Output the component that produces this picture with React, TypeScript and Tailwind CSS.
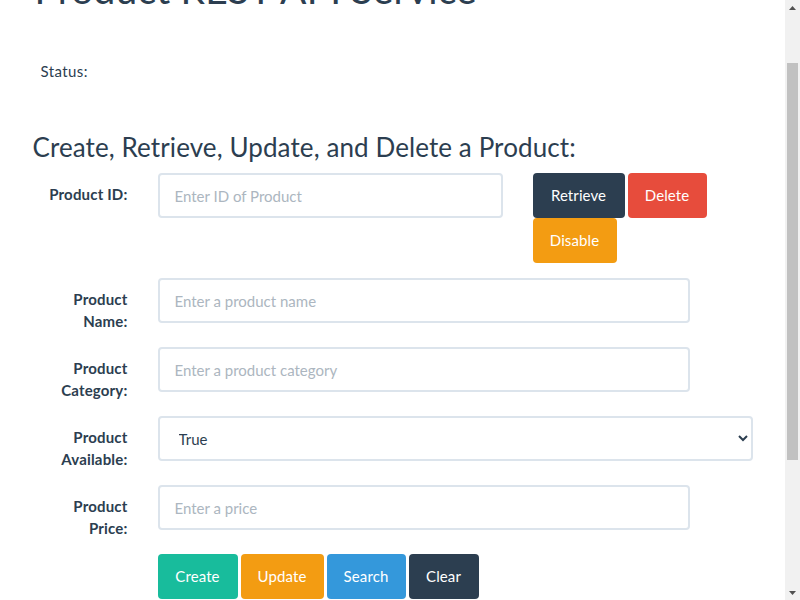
const inputCls =
  "block w-full h-[45px] border-2 border-[#dce4ec] rounded-[4px] px-[15px] text-[15px] text-[#2c3e50] bg-white placeholder:text-[#acb6c0] outline-none";

function Btn({ label, cls }: { label: string; cls: string }) {
  return (
    <button
      className={`h-[45px] rounded-[4px] text-[15px] text-white leading-[21px] text-center shrink-0 tracking-[0.1px] ${cls}`}
    >
      {label}
    </button>
  );
}

function Label({ children }: { children: React.ReactNode }) {
  return (
    <label className="w-[125px] shrink-0 px-[15px] pt-[11px] text-right font-bold text-[15px] leading-[21.43px] tracking-[0.18px]">
      {children}
    </label>
  );
}

function ScrollBar() {
  return (
    <div className="w-[15px] h-[600px] shrink-0 bg-[#f1f1f1] flex flex-col">
      <div className="h-[15px] flex items-center justify-center">
        <svg width="7" height="4" viewBox="0 0 7 4">
          <polygon points="0,4 3.5,0 7,4" fill="#505050" />
        </svg>
      </div>
      <div className="h-[48px]" />
      <div className="h-[397px] mx-[2px] bg-[#c1c1c1]" />
      <div className="flex-1" />
      <div className="h-[15px] flex items-center justify-center">
        <svg width="7" height="4" viewBox="0 0 7 4">
          <polygon points="0,0 7,0 3.5,4" fill="#505050" />
        </svg>
      </div>
    </div>
  );
}

export default function App() {
  return (
    <div
      className="w-[800px] h-[600px] overflow-hidden flex text-[#2c3e50] text-[15px] leading-[21.43px] bg-white"
      style={{ fontFamily: "Lato, 'Open Sans', sans-serif" }}
    >
      <div className="flex-1 min-w-0 h-[600px] overflow-hidden">
        <div className="w-[750px] mx-auto px-[15px] -mt-[32px]">
          <h1 className="text-[39px] leading-[42.9px] font-normal pl-[2px] whitespace-nowrap tracking-[0.17px]">
            Product REST API Service
          </h1>
          <div className="mt-[50px] pl-[8px] tracking-[0.4px]">Status:</div>
          <h3 className="mt-[51px] mb-[11.5px] text-[26px] leading-[28.6px] font-normal tracking-[0.1px]">
            Create, Retrieve, Update, and Delete a Product:
          </h3>

          <div className="-mx-[15px]">
            {/* Product ID */}
            <div className="flex mb-[15px]">
              <Label>Product ID:</Label>
              <div className="w-[375px] px-[15px]">
                <input className={inputCls} placeholder="Enter ID of Product" />
              </div>
              <div className="w-[250px] px-[15px] flex flex-wrap gap-x-[3px] content-start">
                <Btn label="Retrieve" cls="w-[92px] bg-[#2c3e50]" />
                <Btn label="Delete" cls="w-[79px] bg-[#e74c3c]" />
                <Btn label="Disable" cls="w-[84px] bg-[#f39c12]" />
              </div>
            </div>

            {/* Name */}
            <div className="flex mb-[15px]">
              <Label>
                Product
                <br />
                Name:
              </Label>
              <div className="w-[562.5px] px-[15px]">
                <input className={inputCls} placeholder="Enter a product name" />
              </div>
            </div>

            {/* Category */}
            <div className="flex mb-[15px]">
              <Label>
                Product
                <br />
                Category:
              </Label>
              <div className="w-[562.5px] px-[15px]">
                <input className={inputCls} placeholder="Enter a product category" />
              </div>
            </div>

            {/* Available */}
            <div className="flex mb-[15px]">
              <Label>
                Product
                <br />
                Available:
              </Label>
              <div className="w-[625px] px-[15px]">
                <select
                  className="block w-full h-[45px] border-2 border-[#dce4ec] rounded-[4px] px-[15px] text-[15px] text-[#2c3e50] bg-white outline-none"
                  defaultValue="true"
                >
                  <option value="true">True</option>
                  <option value="false">False</option>
                </select>
              </div>
            </div>

            {/* Price */}
            <div className="flex mb-[15px]">
              <Label>
                Product
                <br />
                Price:
              </Label>
              <div className="w-[562.5px] px-[15px]">
                <input className={inputCls} placeholder="Enter a price" />
              </div>
            </div>

            {/* Action buttons */}
            <div className="flex">
              <div className="w-[125px] shrink-0" />
              <div className="px-[15px] flex gap-x-[3px]">
                <Btn label="Create" cls="w-[80px] bg-[#18bc9c]" />
                <Btn label="Update" cls="w-[83px] bg-[#f39c12]" />
                <Btn label="Search" cls="w-[79px] bg-[#3498db]" />
                <Btn label="Clear" cls="w-[70px] bg-[#2c3e50]" />
              </div>
            </div>
          </div>
        </div>
      </div>
      <ScrollBar />
    </div>
  );
}
